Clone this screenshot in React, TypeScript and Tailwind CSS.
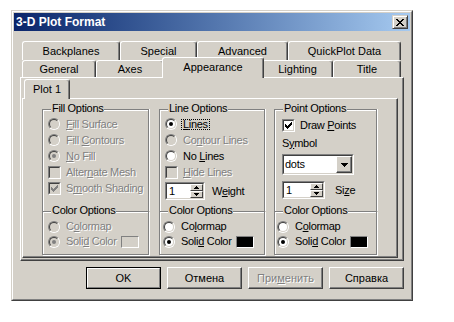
import React from 'react'

const DIS = 'text-[#808080] [text-shadow:1px_1px_0_#fff]'
const RAISED =
  'border border-t-white border-l-white border-r-[#404040] border-b-[#404040] shadow-[inset_-1px_-1px_0_#808080]'
const SUNKEN_OUT = 'border border-t-[#808080] border-l-[#808080] border-r-white border-b-white'
const SUNKEN_IN = 'border border-t-[#404040] border-l-[#404040] border-r-[#d4d0c8] border-b-[#d4d0c8]'

function U({ children }: { children: React.ReactNode }) {
  return <span className="underline">{children}</span>
}

function Radio({ checked, disabled }: { checked?: boolean; disabled?: boolean }) {
  return (
    <span className={`flex h-[12px] w-[12px] shrink-0 rounded-full ${SUNKEN_OUT}`}>
      <span
        className={`flex h-full w-full items-center justify-center rounded-full ${SUNKEN_IN} ${
          disabled ? 'bg-[#d4d0c8]' : 'bg-white'
        }`}
      >
        {checked && (
          <span className={`h-[4px] w-[4px] rounded-full ${disabled ? 'bg-[#808080]' : 'bg-black'}`} />
        )}
      </span>
    </span>
  )
}

function Check({ checked, disabled }: { checked?: boolean; disabled?: boolean }) {
  return (
    <span className={`flex h-[13px] w-[13px] shrink-0 ${SUNKEN_OUT}`}>
      <span
        className={`flex h-full w-full items-center justify-center ${SUNKEN_IN} ${
          disabled ? 'bg-[#d4d0c8]' : 'bg-white'
        }`}
      >
        {checked && (
          <svg width="7" height="7" viewBox="0 0 7 7" shapeRendering="crispEdges">
            <path
              d="M6 0h1v3H6v1H5v1H4v1H3v1H2V6H1V5H0V2h1v1h1v1h1V3h1V2h1V1h1z"
              fill={disabled ? '#808080' : '#000'}
            />
          </svg>
        )}
      </span>
    </span>
  )
}

function Opt({
  control,
  label,
  disabled,
  h = 'h-[16px]',
}: {
  control: React.ReactNode
  label: React.ReactNode
  disabled?: boolean
  h?: string
}) {
  return (
    <div className={`flex items-center ${h}`}>
      <span className="flex w-[13px]">{control}</span>
      <span className={`ml-[5px] whitespace-nowrap ${disabled ? DIS : ''}`}>{label}</span>
    </div>
  )
}

function Swatch({ filled }: { filled?: boolean }) {
  return <span className={`ml-[4px] h-[12px] w-[18px] ${SUNKEN_OUT} ${filled ? 'bg-black' : 'bg-[#d4d0c8]'}`} />
}

function Arrow({ up }: { up?: boolean }) {
  return (
    <svg width="5" height="3" viewBox="0 0 5 3" shapeRendering="crispEdges">
      <path d={up ? 'M2 0h1v1h1v1h1v1H0V2h1V1h1z' : 'M0 0h5v1H4v1H3v1H2V2H1V1H0z'} fill="#000" />
    </svg>
  )
}

function Spin({ w }: { w: string }) {
  return (
    <div className={`flex h-[18px] ${w} ${SUNKEN_OUT}`}>
      <div className={`flex flex-1 bg-white ${SUNKEN_IN}`}>
        <span className="flex-1 pl-[2px] leading-[14px]">1</span>
        <div className="flex w-[13px] flex-col">
          <span className="flex h-[7px] items-center justify-center border border-t-white border-l-white border-r-[#404040] border-b-[#404040] bg-[#d4d0c8]">
            <Arrow up />
          </span>
          <span className="flex h-[7px] items-center justify-center border border-t-white border-l-white border-r-[#404040] border-b-[#404040] bg-[#d4d0c8]">
            <Arrow />
          </span>
        </div>
      </div>
    </div>
  )
}

function GroupTop({ title, children, h = 'h-[102px]', className = '' }: { title: string; children: React.ReactNode; h?: string; className?: string }) {
  return (
    <div
      className={`relative ${h} border border-b-0 border-[#808080] shadow-[inset_1px_1px_0_#fff,1px_0_0_#fff] ${className}`}
    >
      <span className="absolute -top-[8px] left-[8px] bg-[#d4d0c8] px-[1px] leading-[13px]">{title}</span>
      {children}
    </div>
  )
}

function GroupColor({ pl, disabled, filled, colormap }: { pl: string; disabled?: boolean; filled?: boolean; colormap: React.ReactNode }) {
  return (
    <div
      className={`relative h-[44px] border border-[#808080] pt-[7px] shadow-[inset_1px_1px_0_#fff,1px_1px_0_#fff] ${pl}`}
    >
      <span className="absolute -top-[8px] left-[8px] bg-[#d4d0c8] px-[1px] leading-[13px]">Color Options</span>
      <Opt h="h-[15px]" control={<Radio disabled={disabled} />} label={colormap} disabled={disabled} />
      <div className="flex h-[15px] items-center">
        <span className="flex w-[13px]">
          <Radio checked disabled={disabled} />
        </span>
        <span className={`ml-[5px] whitespace-nowrap ${disabled ? DIS : ''}`}>
          Soli<U>d</U> Color
        </span>
        <Swatch filled={filled} />
      </div>
    </div>
  )
}

function Tab({ label, className, selected }: { label: string; className: string; selected?: boolean }) {
  return (
    <div
      className={`flex items-center justify-center rounded-t-[3px] border-t border-l border-r border-t-white border-l-white border-r-[#404040] bg-[#d4d0c8] shadow-[inset_-1px_0_0_#808080] whitespace-nowrap ${
        selected ? 'relative z-10 -mx-[2px] -mb-[1px] pb-[2px]' : ''
      } ${className}`}
    >
      {label}
    </div>
  )
}

function Button({ children, isDefault, disabled }: { children: React.ReactNode; isDefault?: boolean; disabled?: boolean }) {
  if (isDefault) {
    return (
      <div className="h-[22px] w-[75px] border border-black">
        <div className="flex h-full items-center justify-center border border-t-white border-l-white border-r-[#808080] border-b-[#808080]">
          {children}
        </div>
      </div>
    )
  }
  return (
    <div className={`flex h-[22px] w-[75px] items-center justify-center ${RAISED} ${disabled ? DIS : ''}`}>
      {children}
    </div>
  )
}

export default function App() {
  return (
    <div className="h-[322px] w-[454px] bg-white pl-[11px] pt-[10px] font-['Liberation_Sans',Arial,sans-serif] text-[11px] text-black">
      <div className="h-[291px] w-[402px] border border-t-[#d4d0c8] border-l-[#d4d0c8] border-r-[#404040] border-b-[#404040]">
        <div className="flex h-full flex-col border border-t-white border-l-white border-r-[#808080] border-b-[#808080] bg-[#d4d0c8] p-[1px]">
          {/* title bar */}
          <div className="flex h-[18px] items-center justify-between bg-linear-to-r from-[#0a246a] to-[#a6caf0] pl-[2px] pr-[2px]">
            <span className="text-[12px] font-bold text-white">3-D Plot Format</span>
            <span className="flex h-[14px] w-[16px] items-center justify-center border border-t-[#d4d0c8] border-l-[#d4d0c8] border-r-[#404040] border-b-[#404040] bg-[#d4d0c8] shadow-[inset_1px_1px_0_#fff,inset_-1px_-1px_0_#808080]">
              <svg width="8" height="7" viewBox="0 0 8 7" shapeRendering="crispEdges">
                <path
                  d="M0 0h2v1H0zM6 0h2v1H6zM1 1h2v1H1zM5 1h2v1H5zM2 2h4v1H2zM3 3h2v1H3zM2 4h4v1H2zM1 5h2v1H1zM5 5h2v1H5zM0 6h2v1H0zM6 6h2v1H6z"
                  fill="#000"
                />
              </svg>
            </span>
          </div>

          <div className="pl-[6px] pt-[10px]">
            {/* tab rows */}
            <div className="pl-[2px]">
              <div className="flex h-[19px]">
                <Tab label="Backplanes" className="w-[98px]" />
                <Tab label="Special" className="w-[77px]" />
                <Tab label="Advanced" className="w-[91px]" />
                <Tab label="QuickPlot Data" className="w-[113px]" />
              </div>
              <div className="flex h-[17px] items-end">
                <Tab label="General" className="h-[17px] w-[74px]" />
                <Tab label="Axes" className="h-[17px] w-[68px]" />
                <Tab label="Appearance" className="h-[21px] w-[102px]" selected />
                <Tab label="Lighting" className="h-[17px] w-[71px]" />
                <Tab label="Title" className="h-[17px] w-[68px]" />
              </div>
            </div>

            {/* main panel */}
            <div className={`h-[184px] w-[384px] ${RAISED} pl-[1px] pt-[1px]`}>
              <div className="flex h-[19px] items-end pl-[2px]">
                <div className="relative z-10 -mb-[1px] flex h-[20px] w-[46px] items-center justify-center rounded-t-[3px] border-t border-l border-r border-t-white border-l-white border-r-[#404040] bg-[#d4d0c8] pb-[1px] shadow-[inset_-1px_0_0_#808080]">
                  Plot 1
                </div>
              </div>
              <div className={`h-[160px] w-[376px] ${RAISED} pl-[19px] pt-[10px] tracking-[-0.3px]`}>
                <div className="flex">
                  {/* fill */}
                  <div className="flex w-[107px] flex-col">
                    <GroupTop title="Fill Options" className="pl-[5px] pt-[6px]">
                      <Opt control={<Radio disabled />} disabled label={<><U>F</U>ill Surface</>} />
                      <Opt control={<Radio disabled />} disabled label={<>Fill <U>C</U>ontours</>} />
                      <Opt control={<Radio checked disabled />} disabled label={<><U>N</U>o Fill</>} />
                      <Opt control={<Check disabled />} disabled label={<>Alter<U>n</U>ate Mesh</>} />
                      <Opt control={<Check checked disabled />} disabled label={<>S<U>m</U>ooth Shading</>} />
                    </GroupTop>
                    <GroupColor pl="pl-[5px]" disabled colormap={<>C<U>o</U>lormap</>} />
                  </div>

                  {/* line */}
                  <div className="ml-[10px] flex w-[106px] flex-col">
                    <GroupTop title="Line Options" className="pl-[5px] pt-[6px]">
                      <div className="flex h-[16px] items-center">
                        <span className="flex w-[13px]">
                          <Radio checked />
                        </span>
                        <span className="ml-[3px] inline-flex h-[11px] items-center border border-dotted border-black px-[1px]">
                          <U>L</U>ines
                        </span>
                      </div>
                      <Opt control={<Radio disabled />} disabled label={<>Co<U>n</U>tour Lines</>} />
                      <Opt control={<Radio />} label={<>No <U>L</U>ines</>} />
                      <Opt control={<Check disabled />} disabled label={<><U>H</U>ide Lines</>} />
                      <div className="mt-[2px] flex items-center">
                        <Spin w="w-[40px]" />
                        <span className="ml-[7px]">
                          W<U>e</U>ight
                        </span>
                      </div>
                    </GroupTop>
                    <GroupColor pl="pl-[3px]" filled colormap={<>Co<U>l</U>ormap</>} />
                  </div>

                  {/* point */}
                  <div className="ml-[9px] flex w-[103px] flex-col">
                    <GroupTop title="Point Options" className="pl-[7px] pt-[7px]">
                      <Opt control={<Check checked />} label={<>Draw <U>P</U>oints</>} />
                      <div className="mt-[2px] flex h-[16px] items-center">
                        S<U>y</U>mbol
                      </div>
                      <div className={`mt-[3px] flex h-[21px] w-[72px] ${SUNKEN_OUT}`}>
                        <div className={`flex flex-1 items-center bg-white ${SUNKEN_IN}`}>
                          <span className="flex-1 pl-[1px]">dots</span>
                          <span className={`flex h-full w-[16px] items-center justify-center bg-[#d4d0c8] ${RAISED}`}>
                            <svg width="7" height="4" viewBox="0 0 7 4" shapeRendering="crispEdges">
                              <path d="M0 0h7v1H6v1H5v1H4v1H3V3H2V2H1V1H0z" fill="#000" />
                            </svg>
                          </span>
                        </div>
                      </div>
                      <div className="mt-[6px] flex items-center">
                        <Spin w="w-[43px]" />
                        <span className="ml-[10px]">
                          Si<U>z</U>e
                        </span>
                      </div>
                    </GroupTop>
                    <GroupColor pl="pl-[2px]" filled colormap={<>C<U>o</U>lormap</>} />
                  </div>
                </div>
              </div>
            </div>

            {/* buttons */}
            <div className="mt-[6px] flex w-[384px] justify-end gap-[6px]">
              <Button isDefault>OK</Button>
              <Button>Отмена</Button>
              <Button disabled>
                При<U>м</U>енить
              </Button>
              <Button>Справка</Button>
            </div>
          </div>
        </div>
      </div>
    </div>
  )
}
